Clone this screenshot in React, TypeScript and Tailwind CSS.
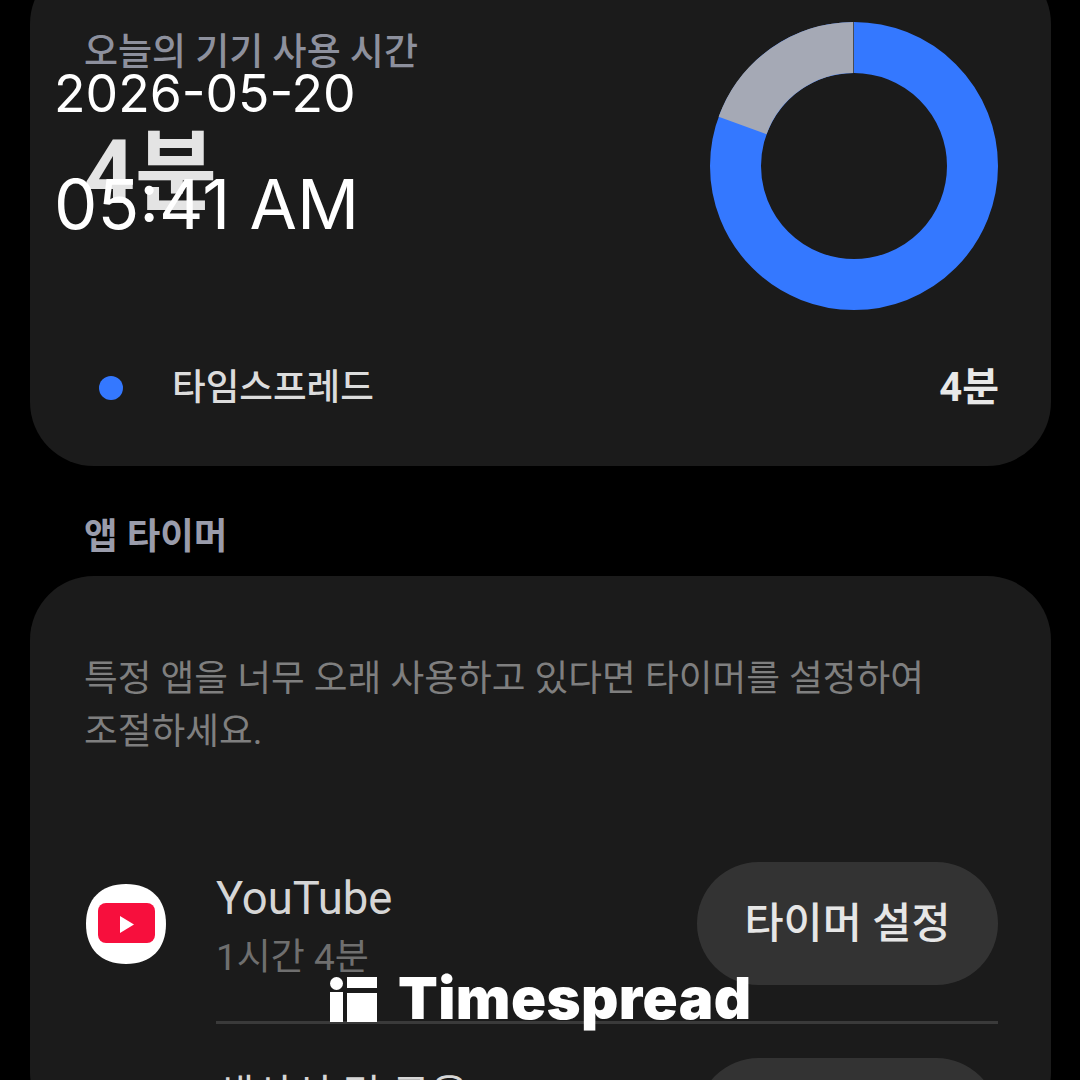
const sans = "font-['Roboto','Noto_Sans_CJK_KR',sans-serif]";

function Donut() {
  // 288px ring, blue from 12 o'clock round to about 290deg, the rest grey
  return (
    <svg width="290" height="290" viewBox="0 0 290 290" className="shrink-0">
      <circle cx="145" cy="145" r="118.5" fill="none" stroke="#3478ff" strokeWidth="51" />
      <path d="M 33.6 104.5 A 118.5 118.5 0 0 1 145 26.5" fill="none" stroke="#a5a9b5" strokeWidth="51" />
      <line x1="144.5" y1="1" x2="144.5" y2="52" stroke="#4a4c52" strokeWidth="1" />
    </svg>
  );
}

function YoutubeIcon() {
  return (
    <svg width="80" height="80" viewBox="0 0 80 80" className="shrink-0 ml-[2px]">
      <path d="M40 0 C65 0 80 15 80 40 C80 65 65 80 40 80 C15 80 0 65 0 40 C0 15 15 0 40 0 Z" fill="#ffffff" />
      <rect x="12" y="19" width="57" height="40" rx="8" fill="#f70f3d" />
      <path d="M34 32 L48 40.5 L34 49 Z" fill="#ffffff" />
    </svg>
  );
}

function TimerButton() {
  return (
    <button className="w-[301px] h-[123px] rounded-full bg-[#333333] text-[#e6e6e6] text-[42.5px] font-medium shrink-0">
      타이머 설정
    </button>
  );
}

export default function App() {
  return (
    <div className={`relative w-[1080px] h-[1080px] overflow-hidden bg-black ${sans}`}>
      <div className="-mt-[40px] mx-[30px] w-[1021px] h-[506px] rounded-[64px] bg-[#1b1b1b] pl-[54px] pr-[52px]">
        <div className="flex justify-between pt-[61px]">
          <div>
            <div className="text-[37px] leading-[48px] font-medium text-[#8d909d] mt-[8px]">오늘의 기기 사용 시간</div>
            <div className="text-[89px] leading-[90px] font-bold text-[#e4e4e4] mt-[51px]">4분</div>
          </div>
          <Donut />
        </div>
        <div className="flex items-center justify-between mt-[53px]">
          <div className="flex items-center gap-[49px] pl-[15px]">
            <span className="w-[24px] h-[24px] rounded-full bg-[#3478ff]" />
            <span className="text-[36.6px] leading-[48px] font-medium text-[#dcdcdc]">타임스프레드</span>
          </div>
          <span className="text-[40px] leading-[48px] font-bold text-[#e8e8e8]">4분</span>
        </div>
      </div>

      <div className="mt-[46px] ml-[84px] text-[36.5px] leading-[50px] font-bold text-[#9a9cab]">앱 타이머</div>

      <div className="mt-[14px] mx-[30px] w-[1021px] h-[560px] rounded-[64px] bg-[#1b1b1b] pl-[54px] pr-[53px] pt-[76px]">
        <p className="text-[36.7px] leading-[53px] text-[#7f7f7f]">
          특정 앱을 너무 오래 사용하고 있다면 타이머를 설정하여
          <br />
          조절하세요.
        </p>
        <div className="flex items-center mt-[104px] h-[123px]">
          <YoutubeIcon />
          <div className="ml-[50px] flex-1 mt-[8px]">
            <div className="text-[45.4px] leading-[52px] text-[#d6d6d6]">YouTube</div>
            <div className="text-[37px] leading-[50px] mt-[8px] text-[#6f6f6f]">1시간 4분</div>
          </div>
          <TimerButton />
        </div>
        <div className="ml-[132px] h-[3px] bg-[#3a3a3a] mt-[36px]" />
        <div className="flex mt-[34px]">
          <div className="ml-[132px] flex-1 text-[42px] leading-[52px] mt-[12px] text-[#d6d6d6]">생산성 및 금융</div>
          <TimerButton />
        </div>
      </div>

      {/* date stamp laid over the screenshot */}
      <div className="absolute left-[54px] top-[62px] text-[51.7px] leading-[62px] text-white font-['Inter',sans-serif]">2026-05-20</div>
      <div className="absolute left-[54px] top-[165px] text-[68.8px] leading-[78px] text-white font-['Inter',sans-serif]">05:41 AM</div>

      {/* watermark */}
      <div className="absolute left-[330px] top-[966px] flex items-start gap-[21px]">
        <svg width="47" height="45" viewBox="0 0 47 45" className="mt-[11px]">
          <circle cx="6.5" cy="6.5" r="6.5" fill="#ffffff" />
          <rect x="0" y="15" width="13" height="30" fill="#ffffff" />
          <rect x="17" y="0" width="30" height="11" fill="#ffffff" />
          <rect x="17" y="16" width="30" height="29" fill="#ffffff" />
        </svg>
        <span className="text-[58px] leading-[64px] font-black tracking-[0.4px] text-white font-['Inter',sans-serif]">Timespread</span>
      </div>
    </div>
  );
}
